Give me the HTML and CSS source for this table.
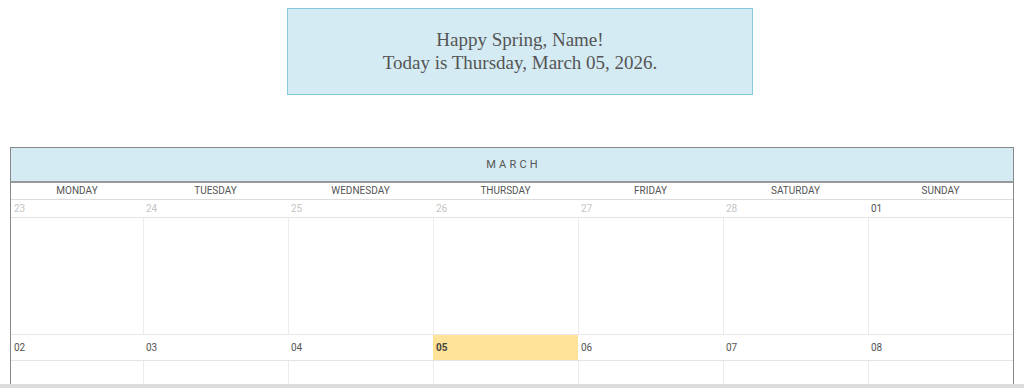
FILE: index.html
```html
<!DOCTYPE html>
<html lang="en">
<head>
<meta charset="utf-8">
<title>Calendar</title>
<link rel="stylesheet" href="styles.css">
</head>
<body>
<div class="banner">
  <p>Happy Spring, Name!</p>
  <p>Today is Thursday, March 05, 2026.</p>
</div>

<div class="calendar">
  <div class="month">MARCH</div>
  <div class="days">
    <div>MONDAY</div><div>TUESDAY</div><div>WEDNESDAY</div><div>THURSDAY</div><div>FRIDAY</div><div>SATURDAY</div><div>SUNDAY</div>
  </div>
  <div class="dates first">
    <div class="other">23</div><div class="other">24</div><div class="other">25</div><div class="other">26</div><div class="other">27</div><div class="other">28</div><div>01</div>
  </div>
  <div class="cells">
    <div></div><div></div><div></div><div></div><div></div><div></div><div></div>
  </div>
  <div class="dates second">
    <div>02</div><div>03</div><div>04</div><div class="today">05</div><div>06</div><div>07</div><div>08</div>
  </div>
  <div class="cells">
    <div></div><div></div><div></div><div></div><div></div><div></div><div></div>
  </div>
</div>
<div class="hscroll"></div>
</body>
</html>
```

FILE: styles.css
```css
html, body {
  margin: 0;
  padding: 0;
  background: #fff;
  overflow: hidden;
}

body {
  padding-top: 8px;
}

.banner {
  box-sizing: border-box;
  width: 466px;
  height: 87px;
  margin-left: 287px;
  background: #d4ebf3;
  border: 1px solid #86c9da;
  display: flex;
  flex-direction: column;
  justify-content: center;
  align-items: center;
  font-family: "Liberation Serif", "DejaVu Serif", serif;
  font-size: 19px;
  color: #555;
  line-height: 23px;
  padding-bottom: 1px;
}

.banner p {
  margin: 0;
}

.calendar {
  box-sizing: border-box;
  margin-top: 52px;
  margin-left: 10px;
  width: 1004px;
  border: 1px solid #888;
  border-bottom: none;
  font-family: Roboto, "Liberation Sans", sans-serif;
  color: #555;
}

.month {
  height: 33px;
  background: #d4ebf3;
  border-bottom: 2px solid #999;
  display: flex;
  align-items: center;
  justify-content: center;
  font-size: 11px;
  letter-spacing: 3.2px;
  padding-left: 3px;
}

.days, .dates, .cells {
  display: grid;
  grid-template-columns: 132px repeat(6, 145px);
}

.days {
  height: 16px;
  border-bottom: 1px solid #dcdcdc;
  font-size: 10px;
  line-height: 16px;
  text-align: center;
}

.dates {
  font-size: 10px;
  border-bottom: 1px solid #e4e4e4;
}

.dates div {
  padding-left: 3px;
  display: flex;
  align-items: center;
}

.dates.first {
  height: 17px;
}

.dates.second {
  height: 25px;
}

.dates .other {
  color: #c4c4c4;
}

.dates .today {
  background: #ffe398;
  font-weight: bold;
  color: #444;
}

.cells {
  height: 116px;
  border-bottom: 1px solid #e8e8e8;
}

.cells div + div {
  border-left: 1px solid #ececec;
}

.hscroll {
  position: fixed;
  left: 0;
  right: 0;
  bottom: 0;
  height: 4px;
  background: #dcdcdc;
}
```
